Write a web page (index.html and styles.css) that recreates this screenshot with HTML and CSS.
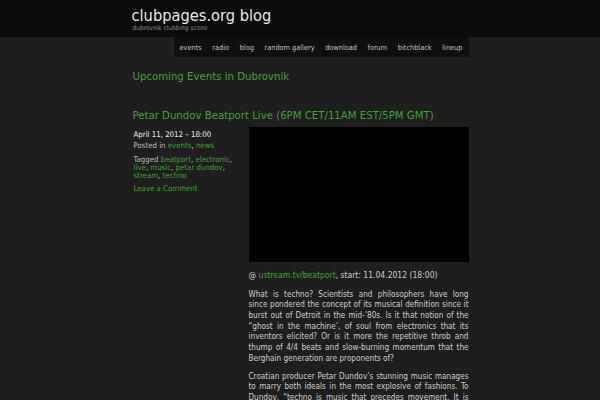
FILE: index.html
```html
<!DOCTYPE html>
<html>
<head>
<meta charset="utf-8">
<link rel="stylesheet" href="styles.css">
</head>
<body>
<header class="masthead">
  <div class="wrap">
    <h1 class="site-title">clubpages.org blog</h1>
    <div class="tagline">dubrovnik clubbing scene</div>
  </div>
</header>
<div class="wrap navrow">
  <nav class="menu">
    <a>events</a><a>radio</a><a>blog</a><a>random gallery</a><a>download</a><a>forum</a><a>bitchblack</a><a>lineup</a>
  </nav>
</div>
<main class="wrap">
  <h2 class="page-title">Upcoming Events in Dubrovnik</h2>
  <h3 class="post-title">Petar Dundov Beatport Live (6PM CET/11AM EST/5PM GMT)</h3>
  <div class="post">
    <aside class="meta">
      <div class="date">April 11, 2012 – 18:00</div>
      <div class="m">Posted in <a>events</a>, <a>news</a></div>
      <div class="m">Tagged <a>beatport</a>, <a>electronic</a>, <a>live</a>, <a>music</a>, <a>petar dundov</a>, <a>stream</a>, <a>techno</a></div>
      <div class="m"><a>Leave a Comment</a></div>
    </aside>
    <div class="entry">
      <div class="video"></div>
      <p class="src">@ <a>ustream.tv/beatport</a>, start: 11.04.2012 (18:00)</p>
      <p>What is techno? Scientists and philosophers have long since pondered the concept of its musical definition since it burst out of Detroit in the mid-’80s. Is it that notion of the “ghost in the machine’, of soul from electronics that its inventors elicited? Or is it more the repetitive throb and thump of 4/4 beats and slow-burning momentum that the Berghain generation are proponents of?</p>
      <p>Croatian producer Petar Dundov’s stunning music manages to marry both ideals in the most explosive of fashions. To Dundov, “techno is music that precedes movement. It is the sound of the future, of machines and of the people who use them.”</p>
    </div>
  </div>
</main>
</body>
</html>
```
FILE: styles.css
```css
html, body { margin: 0; padding: 0; }
body {
  background: #1e1e1e;
  font-family: "DejaVu Sans Condensed", "DejaVu Sans", sans-serif;
  font-stretch: semi-condensed;
  color: #cfcfcf;
  overflow: hidden;
  height: 400px;
}
a { color: #44a038; text-decoration: none; }
.wrap { width: 337px; margin: 0 auto; }
.masthead { background: #0b0b0b; height: 37px; }
.masthead .wrap { padding-top: 7px; }
.site-title {
  margin: 0;
  font-weight: normal;
  font-size: 16.3px;
  line-height: 18px;
  color: #e8e8e8;
}
.tagline { font-size: 6.5px; line-height: 6px; color: #8a8a8a; margin-left: 1px; }
.navrow { display: flex; justify-content: flex-end; }
.menu {
  background: #0f0f0f;
  display: flex;
  height: 20px;
  align-items: center;
  width: 295px;
  justify-content: space-between;
  box-sizing: border-box;
  padding: 0 3px;
}
.menu a { color: #c4c4c4; font-size: 7.3px; padding: 0 3px; }
.page-title {
  margin: 13px 0 0 1px;
  font-weight: normal;
  font-size: 11.3px;
  line-height: 14px;
  color: #44a038;
}
.post-title {
  margin: 25px 0 0 1px;
  font-weight: normal;
  font-size: 11.3px;
  line-height: 14px;
  color: #44a038;
}
.post { display: flex; margin-top: 4px; }
.meta {
  width: 117px;
  flex: none;
  box-sizing: border-box;
  font-size: 7.8px;
  line-height: 7.8px;
  padding: 3.5px 8px 0 2px;
}
.date { color: #f0f0f0; margin-bottom: 4px; }
.m { margin-bottom: 6px; color: #bdbdbd; }
.entry { width: 220px; flex: none; font-size: 8.1px; line-height: 10.7px; }
.video { background: #000; height: 135px; }
.entry p { margin: 0 0 7.3px; text-align: justify; }
.entry p.src { margin: 7.5px 0 8.3px; font-size: 8.5px; }
```
